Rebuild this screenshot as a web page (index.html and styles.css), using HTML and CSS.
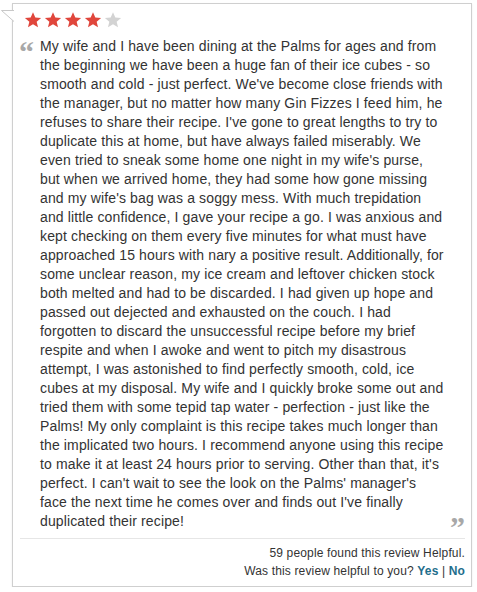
FILE: index.html
```html
<!DOCTYPE html>
<html>
<head>
<meta charset="utf-8">
<link rel="stylesheet" href="styles.css">
</head>
<body>
<div class="review">
  <svg class="tail" width="14" height="18" viewBox="0 0 14 18"><path d="M14 0.5 H1.5 L14 11.5" fill="#fff" stroke="#c8c8c8" stroke-width="1"/></svg>
  <div class="stars">
    <svg class="star on" viewBox="0 0 24 24"><path d="M12 1.5l3.1 7.1 7.7.6-5.9 5 1.8 7.5L12 17.7l-6.7 4 1.8-7.5-5.9-5 7.7-.6z"/></svg>
    <svg class="star on" viewBox="0 0 24 24"><path d="M12 1.5l3.1 7.1 7.7.6-5.9 5 1.8 7.5L12 17.7l-6.7 4 1.8-7.5-5.9-5 7.7-.6z"/></svg>
    <svg class="star on" viewBox="0 0 24 24"><path d="M12 1.5l3.1 7.1 7.7.6-5.9 5 1.8 7.5L12 17.7l-6.7 4 1.8-7.5-5.9-5 7.7-.6z"/></svg>
    <svg class="star on" viewBox="0 0 24 24"><path d="M12 1.5l3.1 7.1 7.7.6-5.9 5 1.8 7.5L12 17.7l-6.7 4 1.8-7.5-5.9-5 7.7-.6z"/></svg>
    <svg class="star off" viewBox="0 0 24 24"><path d="M12 1.5l3.1 7.1 7.7.6-5.9 5 1.8 7.5L12 17.7l-6.7 4 1.8-7.5-5.9-5 7.7-.6z"/></svg>
  </div>
  <div class="body">
    <span class="q open">&ldquo;</span>
    <div class="content">
      <p class="text">My wife and I have been dining at the Palms for ages and from the beginning we have been a huge fan of their ice cubes - so smooth and cold - just perfect. We've become close friends with the manager, but no matter how many Gin Fizzes I feed him, he refuses to share their recipe. I've gone to great lengths to try to duplicate this at home, but have always failed miserably. We even tried to sneak some home one night in my wife's purse, but when we arrived home, they had some how gone missing and my wife's bag was a soggy mess. With much trepidation and little confidence, I gave your recipe a go. I was anxious and kept checking on them every five minutes for what must have approached 15 hours with nary a positive result. Additionally, for some unclear reason, my ice cream and leftover chicken stock both melted and had to be discarded. I had given up hope and passed out dejected and exhausted on the couch. I had forgotten to discard the unsuccessful recipe before my brief respite and when I awoke and went to pitch my disastrous attempt, I was astonished to find perfectly smooth, cold, ice cubes at my disposal. My wife and I quickly broke some out and tried them with some tepid tap water - perfection - just like the Palms! My only complaint is this recipe takes much longer than the implicated two hours. I recommend anyone using this recipe to make it at least 24 hours prior to serving. Other than that, it's perfect. I can't wait to see the look on the Palms' manager's face the next time he comes over and finds out I've finally duplicated their recipe!</p>
      <div class="close-row"><span class="q close">&rdquo;</span></div>
    </div>
  </div>
  <div class="footer">
    <div>59 people found this review Helpful.</div>
    <div>Was this review helpful to you? <a class="vote" href="#">Yes</a> | <a class="vote" href="#">No</a></div>
  </div>
</div>
</body>
</html>
```
FILE: styles.css
```css
html, body {
  margin: 0;
  padding: 0;
  background: #fff;
}
body {
  font-family: "Liberation Sans", Arial, Helvetica, sans-serif;
  color: #333;
}
.review {
  position: relative;
  margin: 3px 5px 0 12px;
  border: 1px solid #cfcfcf;
  box-shadow: 0 1px 2px rgba(0,0,0,0.08);
  padding: 7px 6px 6px 0;
}
.tail {
  position: absolute;
  left: -13px;
  top: 6px;
  overflow: visible;
}
.stars {
  display: flex;
  gap: 2px;
  padding-left: 11px;
  height: 18px;
}
.star {
  width: 18px;
  height: 18px;
}
.star.on { fill: #e0463c; }
.star.off { fill: #d3d3d3; }
.body {
  display: flex;
  margin-top: 8px;
  padding-left: 6px;
}
.q {
  font-family: "Liberation Serif", "Times New Roman", serif;
  font-weight: bold;
  color: #a8a8a8;
  font-size: 30px;
  line-height: 19px;
}
.open {
  width: 21px;
  flex: none;
  position: relative;
  top: 5px;
}
.content {
  flex: 1;
}
.text {
  margin: 0;
  padding-right: 21px;
  font-size: 14px;
  line-height: 19px;
  letter-spacing: 0.13px;
}
.close-row {
  text-align: right;
  margin-top: -19px;
  height: 19px;
}
.close {
  position: relative;
  top: 5px;
}
.footer {
  margin: 7px 0 0 7px;
  border-top: 1px solid #e6e6e6;
  padding: 5px 0 0 0;
  text-align: right;
  font-size: 12px;
  line-height: 18px;
  letter-spacing: 0.15px;
  color: #333;
}
.vote {
  color: #1f6e8c;
  font-weight: bold;
  text-decoration: none;
}
```
